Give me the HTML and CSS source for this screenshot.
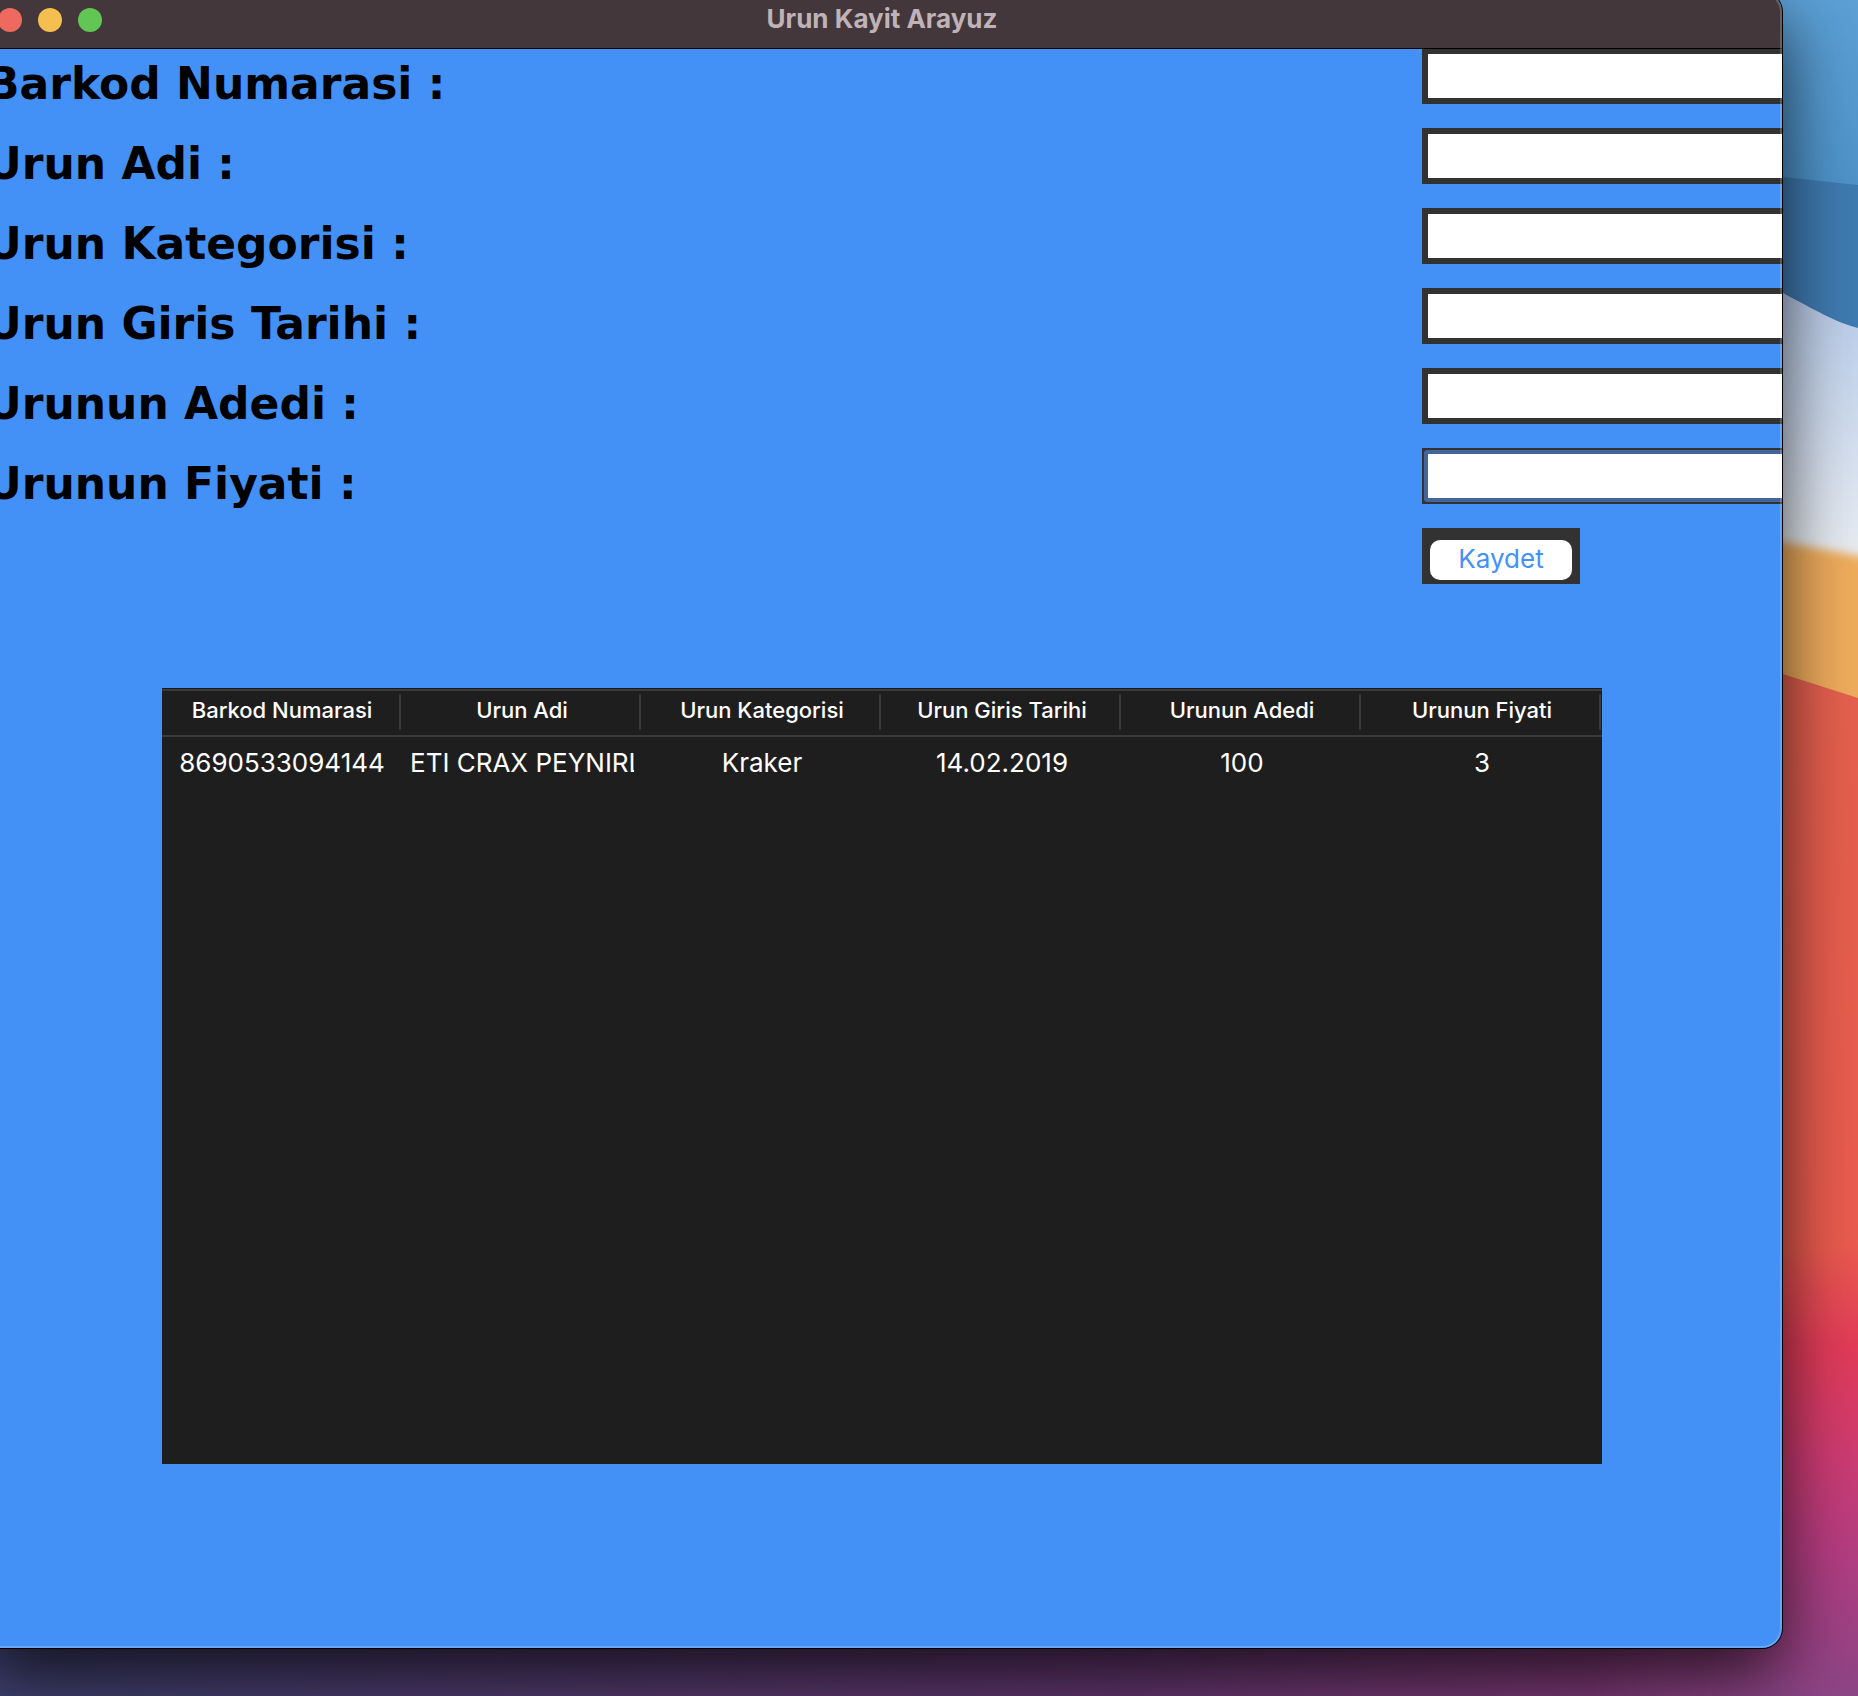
FILE: index.html
```html
<!DOCTYPE html>
<html lang="tr">
<head>
<meta charset="utf-8">
<title>Urun Kayit Arayuz</title>
<link rel="stylesheet" href="styles.css">
</head>
<body>
<div class="desktop">
  <svg class="wallpaper" viewBox="0 0 1858 1696" preserveAspectRatio="xMaxYMax slice" aria-hidden="true">
    <defs>
      <linearGradient id="sky" x1="0" y1="0" x2="0" y2="1"><stop offset="0" stop-color="#5ca0d6"/><stop offset="1" stop-color="#458cc2"/></linearGradient>
      <linearGradient id="mist" x1="0" y1="0" x2="0" y2="1"><stop offset="0" stop-color="#adbce2"/><stop offset=".4" stop-color="#c4d4ec"/><stop offset="1" stop-color="#f0f2f4"/></linearGradient>
      <linearGradient id="ember" gradientUnits="userSpaceOnUse" x1="0" y1="670" x2="0" y2="1696"><stop offset="0" stop-color="#e4604e"/><stop offset=".56" stop-color="#ea5b4e"/><stop offset=".66" stop-color="#e23b58"/><stop offset=".76" stop-color="#cf3b70"/><stop offset=".86" stop-color="#b43d82"/><stop offset="1" stop-color="#8c4586"/></linearGradient>
      <linearGradient id="dusk" x1="0" y1="0" x2="1" y2="0"><stop offset="0" stop-color="#414374"/><stop offset=".3" stop-color="#543c70"/><stop offset=".6" stop-color="#663872"/><stop offset=".86" stop-color="#803a78"/><stop offset=".96" stop-color="#8c4586" stop-opacity="0"/></linearGradient>
      <filter id="soft" x="-10%" y="-10%" width="120%" height="120%"><feGaussianBlur stdDeviation="5"/></filter>
    </defs>
    <rect width="1858" height="300" fill="url(#sky)"/>
    <path d="M1600 165L1783 177L1858 185V400H1600Z" fill="#3f7bb1"/>
    <path d="M1600 200L1783 293C1815 310 1835 322 1858 328V600H1600Z" fill="url(#mist)"/>
    <path d="M1600 508L1783 542L1900 563V760H1600Z" fill="#efac5c" filter="url(#soft)"/>
    <path d="M1600 620L1783 674L1858 698V1696H1600Z" fill="url(#ember)"/>
    <rect y="1560" width="1858" height="136" fill="url(#dusk)"/>
  </svg>

  <main class="window">
    <header class="titlebar">
      <div class="lights">
        <button class="light light--close" type="button" aria-label="Close"></button>
        <button class="light light--minimize" type="button" aria-label="Minimize"></button>
        <button class="light light--zoom" type="button" aria-label="Zoom"></button>
      </div>
      <h1 class="title">Urun Kayit Arayuz</h1>
    </header>

    <form class="form">
      <label class="label" for="barkod">Barkod Numarasi :</label>
      <span class="frame"><input class="input" id="barkod" type="text"></span>
      <label class="label" for="adi">Urun Adi :</label>
      <span class="frame"><input class="input" id="adi" type="text"></span>
      <label class="label" for="kategori">Urun Kategorisi :</label>
      <span class="frame"><input class="input" id="kategori" type="text"></span>
      <label class="label" for="tarih">Urun Giris Tarihi :</label>
      <span class="frame"><input class="input" id="tarih" type="text"></span>
      <label class="label" for="adet">Urunun Adedi :</label>
      <span class="frame"><input class="input" id="adet" type="text"></span>
      <label class="label" for="fiyat">Urunun Fiyati :</label>
      <span class="frame frame--active"><input class="input" id="fiyat" type="text"></span>
      <span class="frame frame--button"><button class="save" type="button">Kaydet</button></span>
    </form>

    <section class="list">
      <table class="products">
        <thead>
          <tr><th>Barkod Numarasi</th><th>Urun Adi</th><th>Urun Kategorisi</th><th>Urun Giris Tarihi</th><th>Urunun Adedi</th><th>Urunun Fiyati</th></tr>
        </thead>
        <tbody>
          <tr><td>8690533094144</td><td class="name">ETI CRAX PEYNIRLI</td><td>Kraker</td><td>14.02.2019</td><td>100</td><td>3</td></tr>
        </tbody>
      </table>
    </section>
  </main>
</div>
</body>
</html>
```
FILE: styles.css
```css
* { box-sizing: border-box; }

body {
  margin: 0;
  font-family: Inter, "Liberation Sans", sans-serif;
}

.desktop {
  position: relative;
  display: flex;
  min-height: 100vh;
  overflow: hidden;
}

.wallpaper {
  position: absolute;
  inset: 0;
  width: 100%;
  height: 100%;
}

.window {
  position: relative;
  flex: 1;
  display: flex;
  flex-direction: column;
  margin: -8px 76px 48px -18px;
  border-radius: 20px;
  overflow: hidden;
  background: #4391f7;
  box-shadow: 0 0 0 1px #000, 0 28px 70px rgba(0, 0, 0, 0.75);
}

/* light rim drawn over the window's content */
.window::after {
  content: "";
  position: absolute;
  inset: 0;
  border-radius: 20px;
  box-shadow: inset 0 0 0 2px rgba(255, 255, 255, 0.2);
  pointer-events: none;
}

.titlebar {
  position: relative;
  display: grid;
  grid-template-columns: 1fr auto 1fr;
  align-items: center;
  height: 56px;
  padding: 0 16px;
  background: #43373b;
  box-shadow: 0 1px 0 #000;
}

.lights { display: flex; gap: 16px; }

.light {
  width: 24px;
  height: 24px;
  padding: 0;
  border: 0;
  border-radius: 50%;
}
.light--close { background: #ee6a5f; }
.light--minimize { background: #f5bf4f; }
.light--zoom { background: #62c655; }

.title {
  margin: 0;
  padding-bottom: 2px;
  font-size: 26px;
  line-height: 32px;
  font-weight: 700;
  color: #bfb3b7;
}

.form {
  display: grid;
  grid-template-columns: 1fr 360px;
  row-gap: 24px;
  padding-left: 4px;
}

.label {
  padding-top: 16px;
  font: bold 44px/40px Verdana, "DejaVu Sans", sans-serif;
  color: #000;
}

.frame {
  display: flex;
  height: 56px;
  padding: 6px 0 6px 6px;
  background: #323232;
}

.input {
  width: 100%;
  padding: 0 8px;
  border: 0;
  border-radius: 0;
  background: #fff;
  font: 26px Inter, sans-serif;
  outline: none;
}

.frame--active { padding: 2px 0 2px 2px; }
.frame--active .input {
  border: 4px solid #44659a;
  border-right: 0;
  border-radius: 4px 0 0 4px;
}

.frame--button {
  grid-column: 2;
  width: 158px;
  padding: 12px 8px 4px;
}

.save {
  width: 100%;
  padding: 0 0 2px;
  border: 0;
  border-radius: 10px;
  background: #fff;
  font: 26px/32px Inter, sans-serif;
  color: #4391f7;
}

.list {
  flex: 1;
  margin: 104px 180px 184px;
  border-top: 1px solid #1a1a1a;
  background: #1e1e1e;
}

.products {
  width: 100%;
  table-layout: fixed;
  border-collapse: separate;
  border-spacing: 0;
  color: #fff;
}

.products th {
  height: 48px;
  padding: 0 0 6px;
  border-top: 2px solid #3a3a3a;
  border-bottom: 2px solid #3a3a3a;
  background: linear-gradient(#3a3a3a, #3a3a3a) right 1px top 3px / 2px 36px no-repeat;
  font-size: 22px;
  line-height: 28px;
  font-weight: 500;
}

.products td {
  height: 52px;
  padding: 0 8px;
  font-size: 26px;
  line-height: 32px;
  text-align: center;
  white-space: nowrap;
  overflow: hidden;
}

.products .name {
  text-align: left;
  overflow: clip;
  overflow-clip-margin: content-box;
}
```
